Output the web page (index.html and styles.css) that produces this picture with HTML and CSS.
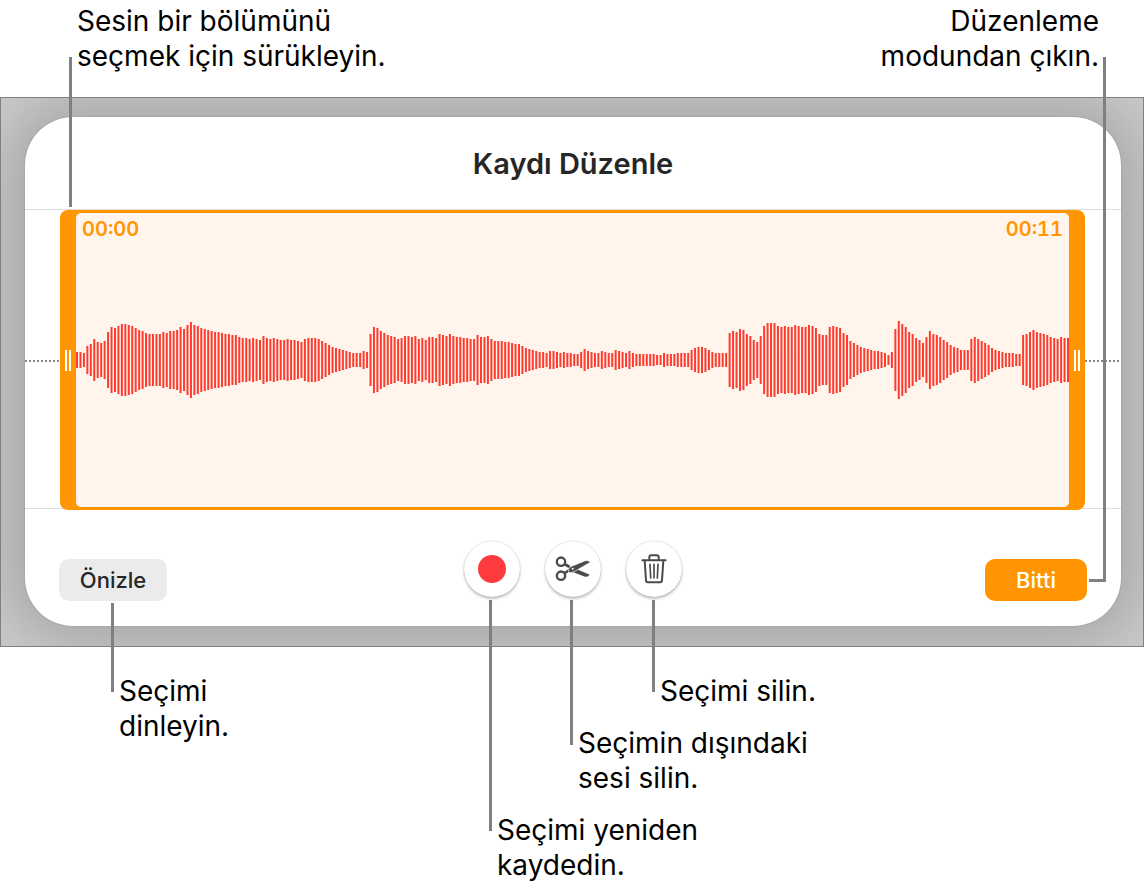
FILE: index.html
```html
<!DOCTYPE html>
<html lang="tr">
<head>
  <meta charset="UTF-8" />
  <meta name="viewport" content="width=device-width, initial-scale=1" />
  <title>Kaydı Düzenle</title>
  <link rel="stylesheet" href="styles.css">
</head>
<body>
  <main class="page">
    <div class="captions-top">
      <p class="caption">Sesin bir bölümünü<br>seçmek için sürükleyin.</p>
      <p class="caption right">Düzenleme<br>modundan çıkın.</p>
    </div>

    <div class="figure">
      <div class="panel">
        <section class="card">
          <h1>Kaydı Düzenle</h1>

          <div class="track">
            <div class="selection">
              <button class="handle" type="button" aria-label="Başlangıç"><span class="grip"></span></button>
              <div class="clip">
                <div class="times"><span>00:00</span><span>00:11</span></div>
                <svg class="wave" viewBox="0 0 994 80" preserveAspectRatio="none" aria-hidden="true"><path id="wave" /></svg>
              </div>
              <button class="handle" type="button" aria-label="Bitiş"><span class="grip"></span></button>
            </div>
          </div>

          <div class="controls">
            <button class="btn preview" type="button">Önizle</button>
            <div class="tools">
              <button class="tool" type="button" aria-label="Kaydet"><span class="record"></span></button>
              <button class="tool" type="button" aria-label="Kırp">
                <svg width="36" height="28" viewBox="0 0 108 84" aria-hidden="true">
                  <g fill="none" stroke="#4a4a4a" stroke-width="7">
                    <circle cx="18" cy="20" r="12.500" />
                    <circle cx="18" cy="62" r="12.500" />
                    <path d="M28 27 L44 36 M28 55 L48 42" stroke-width="8" />
                  </g>
                  <path fill="#4a4a4a" d="M53 51 L66 43 L104 59 Q101 66 90 65 Z" />
                  <path fill="#4a4a4a" stroke="#fff" stroke-width="2" d="M40 44 Q43 33 54 32 L91 17 Q101 15 106 22 L61 48 Q50 56 42 52 Z" />
                  <circle cx="53" cy="41" r="3" fill="#fff" />
                </svg>
              </button>
              <button class="tool" type="button" aria-label="Sil">
                <svg width="26" height="30" viewBox="0 0 78 90" fill="none" stroke="#4a4a4a" stroke-width="6" stroke-linecap="round" stroke-linejoin="round" aria-hidden="true">
                  <path d="M4 19 H74 M25 18 V10 Q25 4 31 4 H47 Q53 4 53 10 V18" />
                  <path d="M11 20 L15 79 Q15 85 21 85 H57 Q63 85 63 79 L67 20" />
                  <path d="M27 31 L29 72 M39 31 V72 M51 31 L49 72" stroke-width="5" />
                </svg>
              </button>
            </div>
            <button class="btn done" type="button">Bitti</button>
          </div>
        </section>
      </div>

      <!-- callout lines drawn over the panel -->
      <span class="leader to-handle"></span>
      <span class="leader to-done"></span>
      <span class="leader to-preview"></span>
      <span class="leader to-record"></span>
      <span class="leader to-trim"></span>
      <span class="leader to-delete"></span>
    </div>

    <div class="captions-bottom">
      <p class="caption listen">Seçimi<br>dinleyin.</p>
      <p class="caption delete">Seçimi silin.</p>
      <p class="caption trim">Seçimin dışındaki<br>sesi silin.</p>
      <p class="caption rerecord">Seçimi yeniden<br>kaydedin.</p>
    </div>
  </main>

  <script>
    // Half height of every bar in the recording
    const levels = [
      8,8,7,14,16,21,18,17,19,28,33,32,34,36,36,35,34,32,30,29,27,26,26,26,26,28,27,29,29,30,33,31,
      35,38,35,34,32,31,30,29,28,28,27,26,26,25,25,23,22,22,21,22,21,20,24,22,21,22,21,20,20,21,20,20,
      19,18,21,22,22,22,21,19,17,15,13,12,11,10,9,8,7,7,7,9,8,26,33,32,29,27,25,24,23,21,22,24,
      24,23,24,21,22,20,23,23,22,26,25,24,26,24,23,23,22,22,21,21,25,23,23,24,21,19,19,19,18,18,17,16,
      16,14,12,11,10,9,8,8,7,9,9,8,7,8,7,7,6,6,8,11,9,8,7,7,9,8,7,7,10,9,8,7,
      9,7,6,6,6,6,6,6,5,5,7,6,6,6,7,7,7,7,10,12,13,13,12,10,8,7,7,7,7,27,29,28,
      31,30,26,24,20,18,24,34,37,37,37,34,33,34,33,33,35,34,33,33,35,34,32,26,25,25,33,34,33,32,27,25,
      19,17,15,13,12,11,10,9,9,8,7,5,8,31,39,36,33,28,26,22,20,17,23,29,26,25,23,20,18,15,13,12,
      10,10,10,21,23,21,19,17,15,12,10,9,8,7,7,7,6,6,25,26,28,30,28,27,26,25,23,22,21,23,22,22
    ];
    const step = 992 / (levels.length - 1);
    document.getElementById('wave').setAttribute('d', levels.map((h, i) =>
      `M${(1 + i * step).toFixed(2)} ${40 - h}V${40 + h}`).join(''));
  </script>
</body>
</html>
```
FILE: styles.css
```css
* {
  box-sizing: border-box;
}
body {
  margin: 0;
  background: #fff;
  color: #000;
  font-family: Inter, "Liberation Sans", sans-serif;
}
button {
  border: none;
  padding: 0;
  font-family: inherit;
  cursor: pointer;
}
.caption {
  margin: 0;
  font-size: 28px;
  line-height: 35px;
}
.right {
  text-align: right;
}
.captions-top {
  display: flex;
  justify-content: space-between;
  padding: 4px 45px 23px 77px;
}
.figure {
  position: relative;
}
.panel {
  overflow: hidden;
  padding: 19px 22px 20px 24px;
  border: 1px solid #808080;
  background: #cccccc;
}
.card {
  padding-bottom: 25px;
  border-radius: 48px;
  background: #fff;
  box-shadow: 0 0 2px rgba(0,0,0,0.2), 0 0 60px 20px rgba(0,0,0,0.18);
}
h1 {
  margin: 0;
  padding: 27px 0 25px;
  font-size: 29px;
  line-height: 40px;
  font-weight: 600;
  text-align: center;
  color: #262626;
}
.track {
  height: 300px;
  padding: 0 36px 0 35px;
  border-top: 1px solid #dedede;
  border-bottom: 1px solid #dedede;
  background: repeating-linear-gradient(90deg, #888 0 2px, #fff 2px 4px) center 150px / 100% 2px no-repeat;
}
.selection {
  display: flex;
  height: 300px;
  border-radius: 8px;
  background: #ff9500;
}
.handle {
  display: flex;
  flex: 0 0 16px;
  align-items: center;
  justify-content: center;
  background: none;
}
.grip {
  width: 6px;
  height: 21px;
  border: solid #fff;
  border-width: 0 2px;
}
.clip {
  display: flex;
  flex: 1;
  flex-direction: column;
  margin: 3px 0;
  border-radius: 5px;
  background: #fff5ec;
}
.times {
  display: flex;
  justify-content: space-between;
  padding: 4px 6px 0;
  height: 107px;
  font-size: 20px;
  line-height: 24px;
  font-weight: 600;
  font-variant-numeric: tabular-nums;
  color: #ff9500;
}
.wave {
  display: block;
  width: 100%;
  height: 80px;
}
.wave path {
  stroke: #ff3b30;
  stroke-width: 2;
}
.controls {
  display: grid;
  grid-template-columns: 1fr auto 1fr;
  align-items: end;
  padding: 32px 34px 0;
}
.btn {
  height: 42px;
  border-radius: 10px;
  font-size: 22px;
  font-weight: 500;
}
.preview {
  justify-self: start;
  width: 108px;
  background: #ebebeb;
  color: #262626;
}
.done {
  justify-self: end;
  width: 102px;
  background: #ff9500;
  color: #fff;
}
.tools {
  display: flex;
  gap: 25px;
  padding-bottom: 4px;
}
.tool {
  display: flex;
  align-items: center;
  justify-content: center;
  width: 56px;
  height: 56px;
  border-radius: 50%;
  background: #fff;
  box-shadow: 0 0 1px rgba(0,0,0,0.3), 0 2px 3px rgba(0,0,0,0.25);
}
.record {
  width: 28px;
  height: 28px;
  border-radius: 50%;
  background: #ff3b3f;
}
.leader {
  position: absolute;
  width: 3px;
  background: #808080;
}
.to-handle {
  left: 69px;
  top: -40px;
  height: 150px;
}
.to-done {
  right: 38px;
  top: -40px;
  width: 17px;
  height: 525px;
  border: solid #808080;
  border-width: 0 3px 3px 0;
  background: none;
}
.to-preview {
  left: 111px;
  top: 506px;
  height: 89px;
}
.to-record {
  left: calc(50% - 83px);
  top: 503px;
  height: 231px;
}
.to-trim {
  left: calc(50% - 2px);
  top: 503px;
  height: 145px;
}
.to-delete {
  left: calc(50% + 80px);
  top: 503px;
  height: 92px;
}
.captions-bottom {
  display: grid;
  grid-template-columns: calc(50% - 75px) 81px 82px 1fr;
  row-gap: 17px;
  padding: 27px 0 5px;
}
.listen {
  grid-column: 1;
  grid-row: 1 / 3;
  padding-left: 119px;
}
.delete {
  grid-column: 4;
  grid-row: 1;
}
.trim {
  grid-column: 3 / 5;
  grid-row: 2;
}
.rerecord {
  grid-column: 2 / 5;
  grid-row: 3;
}
```
